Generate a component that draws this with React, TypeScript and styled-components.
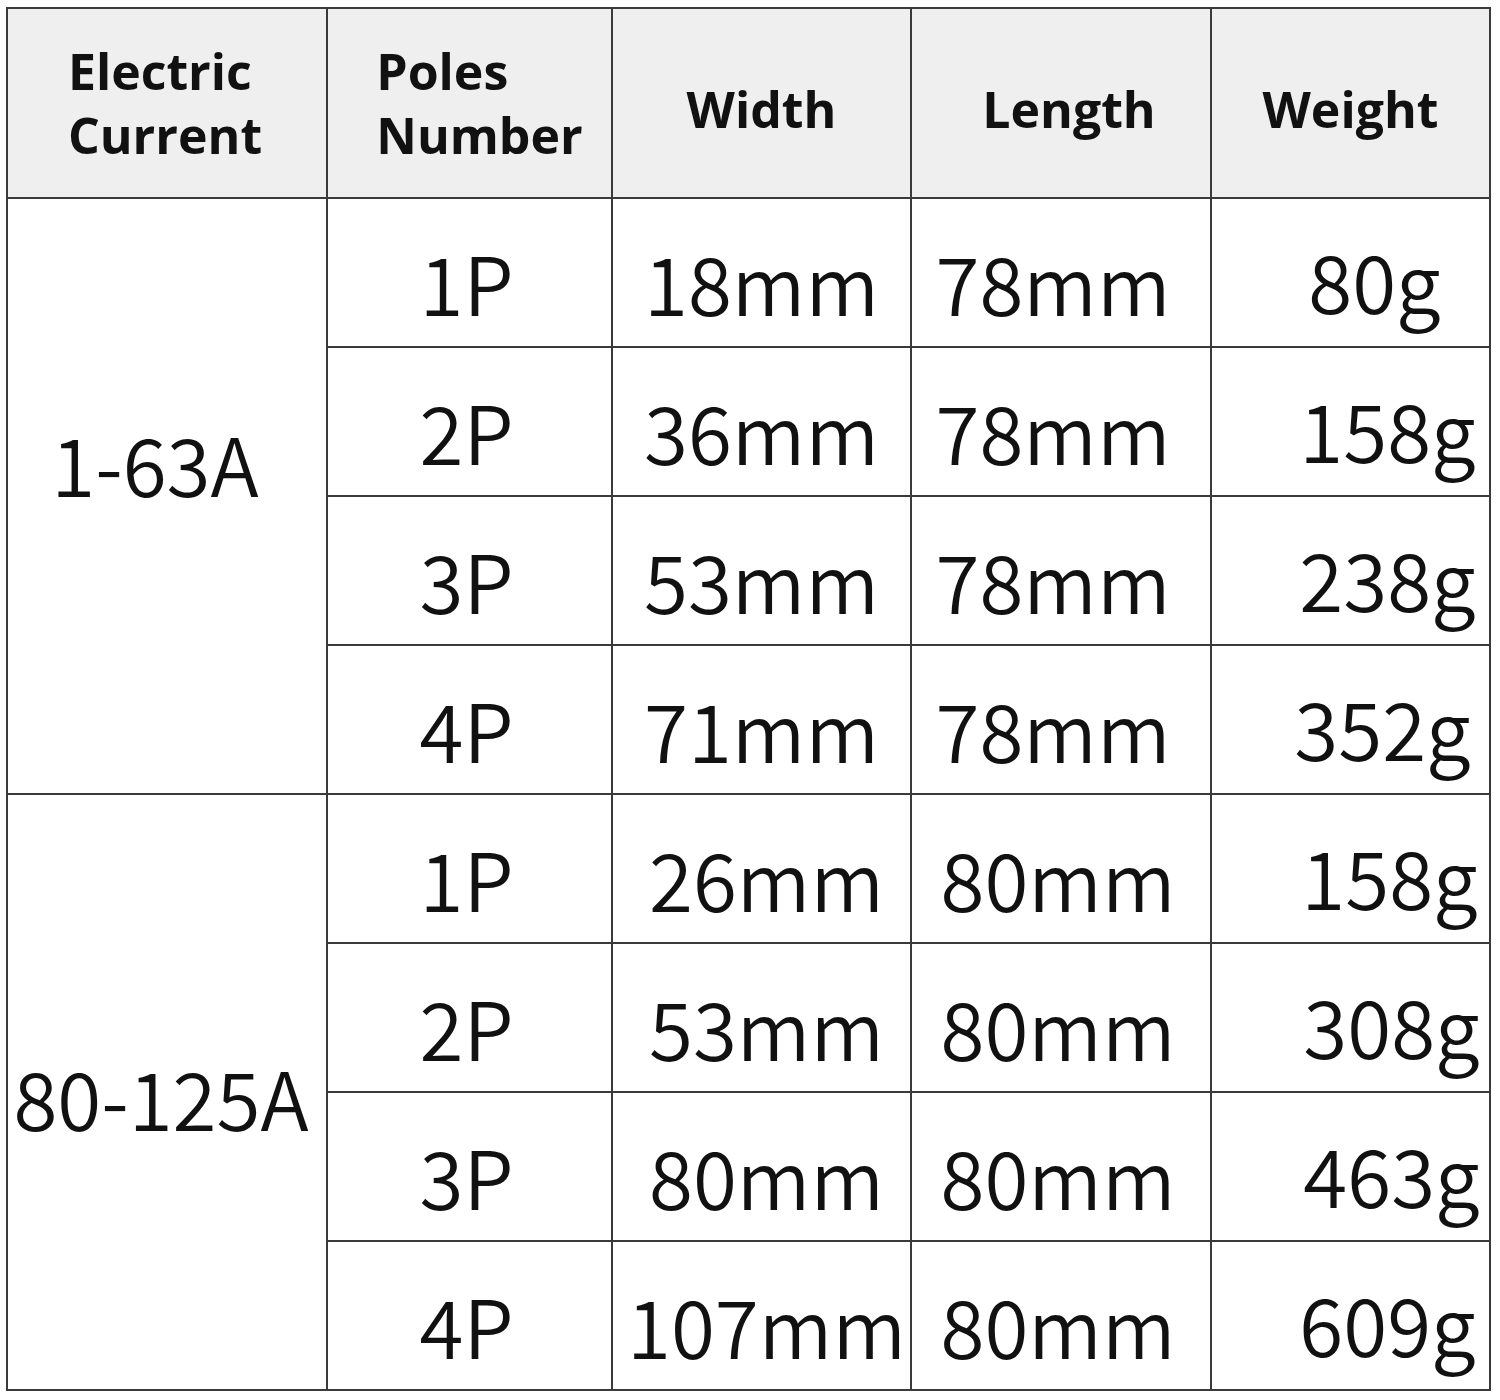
import React from "react";
import styled, { createGlobalStyle } from "styled-components";

const Global = createGlobalStyle`
  html, body { margin: 0; padding: 0; background: #ffffff; }
  body { width: 1500px; height: 1400px; overflow: hidden; }
`;

const Table = styled.div`
  display: grid;
  grid-template-columns: 318px 283px 297px 298px 277px;
  grid-template-rows: 188px repeat(8, 147px);
  gap: 2px;
  padding: 2px;
  background: #3a3a3a;
  margin: 7px 0 0 6px;
  width: max-content;
`;

const HeadCell = styled.div<{ $dy?: number }>`
  background: #efefef;
  display: flex;
  align-items: center;
  justify-content: center;
  padding-top: ${(p) => p.$dy ?? 0}px;
  box-sizing: border-box;
  font-family: "Open Sans", "Noto Sans", sans-serif;
  font-weight: 700;
  font-size: 50px;
  line-height: 64px;
  color: #111;
`;

const HeadText = styled.div<{ $shift?: number }>`
  text-align: left;
  transform: translateX(${(p) => p.$shift ?? 0}px);
`;

const Cell = styled.div<{ $span?: number; $shift?: number; $dy?: number }>`
  background: #ffffff;
  grid-row: span ${(p) => p.$span ?? 1};
  display: flex;
  align-items: center;
  justify-content: center;
  font-family: "Noto Sans CJK SC", "Noto Sans", sans-serif;
  font-weight: 350;
  font-size: 80px;
  color: #111;
  line-height: 1;
  padding-left: ${(p) => Math.max(0, (p.$shift ?? 0) * 2)}px;
  padding-right: ${(p) => Math.max(0, -(p.$shift ?? 0) * 2)}px;
  padding-top: ${(p) => Math.max(0, (p.$dy ?? 0) * 2)}px;
  padding-bottom: ${(p) => Math.max(0, -(p.$dy ?? 0) * 2)}px;
  box-sizing: border-box;
  white-space: nowrap;
`;

type Row = { poles: string; width: string; length: string; weight: string; ws: number };

const groups: { current: string; dy: number; dx: number; colShift: number; rows: Row[] }[] = [
  {
    current: "1-63A",
    dy: -34,
    dx: -12,
    colShift: 0,
    rows: [
      { poles: "1P", width: "18mm", length: "78mm", weight: "80g", ws: 24 },
      { poles: "2P", width: "36mm", length: "78mm", weight: "158g", ws: 37 },
      { poles: "3P", width: "53mm", length: "78mm", weight: "238g", ws: 37 },
      { poles: "4P", width: "71mm", length: "78mm", weight: "352g", ws: 32 },
    ],
  },
  {
    current: "80-125A",
    dy: 4,
    dx: -6,
    colShift: 5,
    rows: [
      { poles: "1P", width: "26mm", length: "80mm", weight: "158g", ws: 39 },
      { poles: "2P", width: "53mm", length: "80mm", weight: "308g", ws: 41 },
      { poles: "3P", width: "80mm", length: "80mm", weight: "463g", ws: 41 },
      { poles: "4P", width: "107mm", length: "80mm", weight: "609g", ws: 37 },
    ],
  },
];

export default function App() {
  return (
    <>
      <Global />
      <Table>
        <HeadCell>
          <HeadText $shift={-2}>
            Electric
            <br />
            Current
          </HeadText>
        </HeadCell>
        <HeadCell>
          <HeadText $shift={10}>
            Poles
            <br />
            Number
          </HeadText>
        </HeadCell>
        <HeadCell $dy={12}>
          <HeadText>Width</HeadText>
        </HeadCell>
        <HeadCell $dy={12}>
          <HeadText $shift={8}>Length</HeadText>
        </HeadCell>
        <HeadCell $dy={12}>
          <HeadText>Weight</HeadText>
        </HeadCell>
        {groups.map((g) => (
          <React.Fragment key={g.current}>
            <Cell $span={4} $dy={g.dy} $shift={g.dx}>
              {g.current}
            </Cell>
            {g.rows.map((r, i) => (
              <React.Fragment key={g.current + i}>
                <Cell style={{ gridColumn: 2 }} $shift={-3} $dy={8}>
                  {r.poles}
                </Cell>
                <Cell $shift={g.colShift} $dy={8}>
                  {r.width}
                </Cell>
                <Cell $shift={-8 + g.colShift} $dy={8}>
                  {r.length}
                </Cell>
                <Cell $shift={r.ws} $dy={6}>
                  {r.weight}
                </Cell>
              </React.Fragment>
            ))}
          </React.Fragment>
        ))}
      </Table>
    </>
  );
}
